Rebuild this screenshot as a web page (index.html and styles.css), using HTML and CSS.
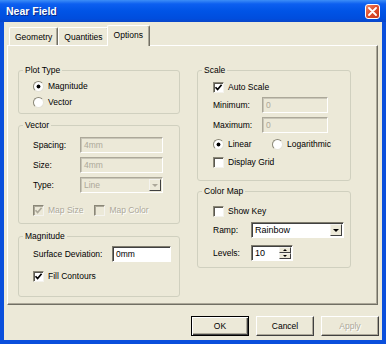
FILE: index.html
```html
<!DOCTYPE html>
<html lang="en">
<head>
    <meta charset="UTF-8">
    <title>Near Field</title>
    <link rel="stylesheet" href="styles.css">
</head>
<body>

<div class="window">
    <div class="titlebar">
        <span class="title">Near Field</span>
        <span class="close">
            <svg width="9" height="9" viewBox="0 0 9 9"><path d="M1 1 L8 8 M8 1 L1 8" stroke="#fff" stroke-width="1.8" stroke-linecap="round"/></svg>
        </span>
    </div>

    <div class="client">
        <div class="tabs">
            <div class="tab">Geometry</div>
            <div class="tab">Quantities</div>
            <div class="tab active">Options</div>
        </div>

        <div class="panel">
            <!-- левая колонка -->
            <div class="col col-left">
                <fieldset class="group">
                    <legend>Plot Type</legend>
                    <div class="body plot-body">
                        <div class="opt"><span class="radio on"></span>Magnitude</div>
                        <div class="opt"><span class="radio"></span>Vector</div>
                    </div>
                </fieldset>

                <fieldset class="group vector">
                    <legend>Vector</legend>
                    <div class="body vector-body">
                        <div class="field"><span class="lbl lbl-v">Spacing:</span><span class="edit off w-vec">4mm</span></div>
                        <div class="field mt4"><span class="lbl lbl-v">Size:</span><span class="edit off w-vec">4mm</span></div>
                        <div class="field mt4">
                            <span class="lbl lbl-v">Type:</span>
                            <span class="combo off w-vec"><span class="val">Line</span><span class="drop"><i></i></span></span>
                        </div>
                        <div class="opt dim mt9">
                            <span class="check off on"><svg viewBox="0 0 9 9"><path d="M1.5 4.2 L3.6 6.5 L7.6 1.8" fill="none" stroke="#aca899" stroke-width="1.7"/></svg></span>Map Size
                            <span class="check off sp"></span>Map Color
                        </div>
                    </div>
                </fieldset>

                <fieldset class="group magnitude">
                    <legend>Magnitude</legend>
                    <div class="body mag-body">
                        <div class="field"><span class="lbl lbl-s">Surface Deviation:</span><span class="edit w-dev">0mm</span></div>
                        <div class="opt mt6">
                            <span class="check"><svg viewBox="0 0 9 9"><path d="M1.5 4.2 L3.6 6.5 L7.6 1.8" fill="none" stroke="#000" stroke-width="1.7"/></svg></span>Fill Contours
                        </div>
                    </div>
                </fieldset>
            </div>

            <!-- правая колонка -->
            <div class="col col-right">
                <fieldset class="group">
                    <legend>Scale</legend>
                    <div class="body scale-body">
                        <div class="opt">
                            <span class="check"><svg viewBox="0 0 9 9"><path d="M1.5 4.2 L3.6 6.5 L7.6 1.8" fill="none" stroke="#000" stroke-width="1.7"/></svg></span>Auto Scale
                        </div>
                        <div class="field mt2"><span class="lbl lbl-m">Minimum:</span><span class="edit off w-min">0</span></div>
                        <div class="field mt4"><span class="lbl lbl-m">Maximum:</span><span class="edit off w-min">0</span></div>
                        <div class="opt mt3">
                            <span class="radio on"></span><span class="lin">Linear</span>
                            <span class="radio"></span>Logarithmic
                        </div>
                        <div class="opt mt2"><span class="check"></span>Display Grid</div>
                    </div>
                </fieldset>

                <fieldset class="group colormap">
                    <legend>Color Map</legend>
                    <div class="body cmap-body">
                        <div class="opt"><span class="check"></span>Show Key</div>
                        <div class="field mt3">
                            <span class="lbl lbl-r">Ramp:</span>
                            <span class="combo w-ramp"><span class="val">Rainbow</span><span class="drop"><i></i></span></span>
                        </div>
                        <div class="field mt7">
                            <span class="lbl lbl-r">Levels:</span>
                            <span class="edit spin w-lev"><span class="val">10</span><span class="arrows"><b class="up"></b><b class="down"></b></span></span>
                        </div>
                    </div>
                </fieldset>
            </div>
        </div>

        <div class="buttons">
            <button class="btn default">OK</button>
            <button class="btn">Cancel</button>
            <button class="btn disabled">Apply</button>
        </div>
    </div>
</div>

</body>
</html>
```

FILE: styles.css
```css
body {
    margin: 0;
    font-family: "Liberation Sans", Arial, sans-serif;
    font-size: 8.5px;
    color: #000;
}

.window {
    width: 386px;
    height: 344px;
    background: #0a4fdc;
    display: flex;
    flex-direction: column;
}

/* заголовок окна */
.titlebar {
    height: 22px;
    flex: none;
    display: flex;
    align-items: center;
    justify-content: space-between;
    padding: 0 6px 0 6px;
    box-sizing: border-box;
    background: linear-gradient(to bottom, #3d8ef7 0%, #0d5ff0 18%, #0054e6 50%, #004ddd 85%, #0a46c8 100%);
}

.title {
    color: #fff;
    font-weight: bold;
    font-size: 10.5px;
    text-shadow: 1px 1px #0a2a8a;
}

.close {
    width: 15px;
    height: 15px;
    box-sizing: border-box;
    border: 1px solid #fff;
    border-radius: 3px;
    background: linear-gradient(135deg, #f08a6a 0%, #e0502e 45%, #c7381c 100%);
    display: flex;
    align-items: center;
    justify-content: center;
}

.client {
    flex: 1;
    margin: 0 4px 4px 4px;
    background: #ece9d8;
    display: flex;
    flex-direction: column;
}

/* вкладки */
.tabs {
    height: 23px;
    flex: none;
    display: flex;
    align-items: flex-end;
    margin-left: 3px;
    padding-left: 2px;
}

.tab {
    height: 18px;
    padding: 0 5px;
    box-sizing: border-box;
    display: flex;
    align-items: center;
    border-top: 1px solid #fff;
    border-left: 1px solid #fff;
    border-right: 1px solid #716f64;
    box-shadow: inset -1px 0 #aca899;
    border-radius: 2px 2px 0 0;
}

.tab.active {
    height: 21px;
    margin-left: -2px;
    padding: 0 6px 2px 6px;
    margin-bottom: -1px;
    background: #ece9d8;
    position: relative;
    z-index: 1;
}

.panel {
    height: 260px;
    flex: none;
    box-sizing: border-box;
    margin: 0 4px 0 3px;
    border: 1px solid;
    border-color: #fff #716f64 #716f64 #fff;
    box-shadow: inset -1px -1px #aca899;
    padding: 19px 0 0 10px;
    display: flex;
    gap: 17px;
}

.col {
    display: flex;
    flex-direction: column;
}

.col-left { width: 162px; }
.col-right { width: 154px; }

.group {
    margin: 0;
    padding: 0;
    min-width: 0;
    border: 1px solid #d0d0bf;
    border-radius: 3px;
}

.group legend {
    line-height: 10px;
    padding: 0 2px;
    margin-left: 4px;
}

.vector { margin-top: 6px; }
.magnitude { margin-top: 7px; }
.colormap { margin-top: 5px; }

.body { padding-left: 14px; }
.plot-body { padding-top: 3px; padding-bottom: 3px; }
.vector-body { padding-top: 7px; padding-bottom: 5px; }
.mag-body { padding-top: 5px; padding-bottom: 12px; }
.scale-body { padding: 4px 0 10px 15px; }
.cmap-body { padding: 7px 0 6px 15px; }

.mt2 { margin-top: 2px; }
.mt3 { margin-top: 3px; }
.mt4 { margin-top: 4px; }
.mt6 { margin-top: 6px; }
.mt7 { margin-top: 7px; }
.mt9 { margin-top: 9px; }

.opt, .field {
    height: 16px;
    display: flex;
    align-items: center;
    white-space: nowrap;
}

.opt.dim {
    color: #aca899;
    text-shadow: 1px 1px #fff;
}

.radio {
    width: 11px;
    height: 11px;
    flex: none;
    box-sizing: border-box;
    border-radius: 50%;
    border: 1px solid;
    border-color: #8a8777 #e4e2d6 #e4e2d6 #8a8777;
    background: #fff;
    margin-right: 4px;
}

.radio.on {
    background: radial-gradient(circle, #000 0, #000 1.6px, #fff 2.3px);
}

.lin { width: 44px; }

.check {
    width: 11px;
    height: 11px;
    flex: none;
    box-sizing: border-box;
    border: 1px solid;
    border-color: #8a8777 #f4f3ee #f4f3ee #8a8777;
    box-shadow: inset 1px 1px #5a5850;
    background: #fff;
    margin-right: 4px;
    display: flex;
}

.check svg {
    width: 9px;
    height: 9px;
}

.check.off {
    background: #ece9d8;
    box-shadow: inset 1px 1px #aca899;
}

.check.sp { margin-left: 11px; }

.lbl { flex: none; }
.lbl-v { width: 47px; }
.lbl-s { width: 79px; }
.lbl-m { width: 49px; }
.lbl-r { width: 38px; }

.edit, .combo {
    height: 16px;
    box-sizing: border-box;
    border: 1px solid;
    border-color: #7e7b6d #fff #fff #7e7b6d;
    box-shadow: inset 1px 1px #404040;
    background: #fff;
    padding-left: 3px;
    line-height: 14px;
    display: flex;
    align-items: center;
}

.edit.off, .combo.off {
    background: #ece9d8;
    color: #aca899;
    border-color: #aca899 #fff #fff #aca899;
    box-shadow: inset 1px 1px #c9c6b8;
}

.w-vec { width: 83px; }
.w-dev { width: 59px; }
.w-min { width: 66px; }
.w-ramp { width: 93px; font-size: 9px; }
.w-lev { width: 42px; font-size: 9px; }

.combo .val, .spin .val { flex: 1; }

.combo { padding-right: 1px; }

.drop {
    width: 12px;
    height: 12px;
    box-sizing: border-box;
    border: 1px solid;
    border-color: #f4f3ee #404040 #404040 #f4f3ee;
    background: #ece9d8;
    display: flex;
    align-items: center;
    justify-content: center;
}

.drop i {
    width: 0;
    height: 0;
    border-left: 3px solid transparent;
    border-right: 3px solid transparent;
    border-top: 3px solid #000;
}

.combo.off .drop i { border-top-color: #aca899; }

.spin { padding-right: 1px; }

.arrows {
    width: 12px;
    height: 12px;
    display: flex;
    flex-direction: column;
}

.arrows b {
    flex: 1;
    box-sizing: border-box;
    border: 1px solid;
    border-color: #f4f3ee #404040 #404040 #f4f3ee;
    background: #ece9d8;
    display: flex;
    align-items: center;
    justify-content: center;
}

.arrows b::after {
    content: "";
    border-left: 2px solid transparent;
    border-right: 2px solid transparent;
}

.arrows .up::after { border-bottom: 2px solid #000; }
.arrows .down::after { border-top: 2px solid #000; }

/* кнопки внизу */
.buttons {
    display: flex;
    justify-content: flex-end;
    gap: 7px;
    margin: 11px 3px 0 0;
}

.btn {
    width: 58px;
    height: 20px;
    padding: 0;
    font-family: inherit;
    font-size: 8.5px;
    color: #000;
    background: #ece9d8;
    border: 1px solid;
    border-color: #fff #404040 #404040 #fff;
    box-shadow: inset -1px -1px #aca899;
}

.btn.default {
    border: 1px solid #000;
    box-shadow: inset 1px 1px #fff, inset -1px -1px #404040, inset -2px -2px #aca899;
}

.btn.disabled {
    color: #aca899;
    text-shadow: 1px 1px #fff;
}
```
